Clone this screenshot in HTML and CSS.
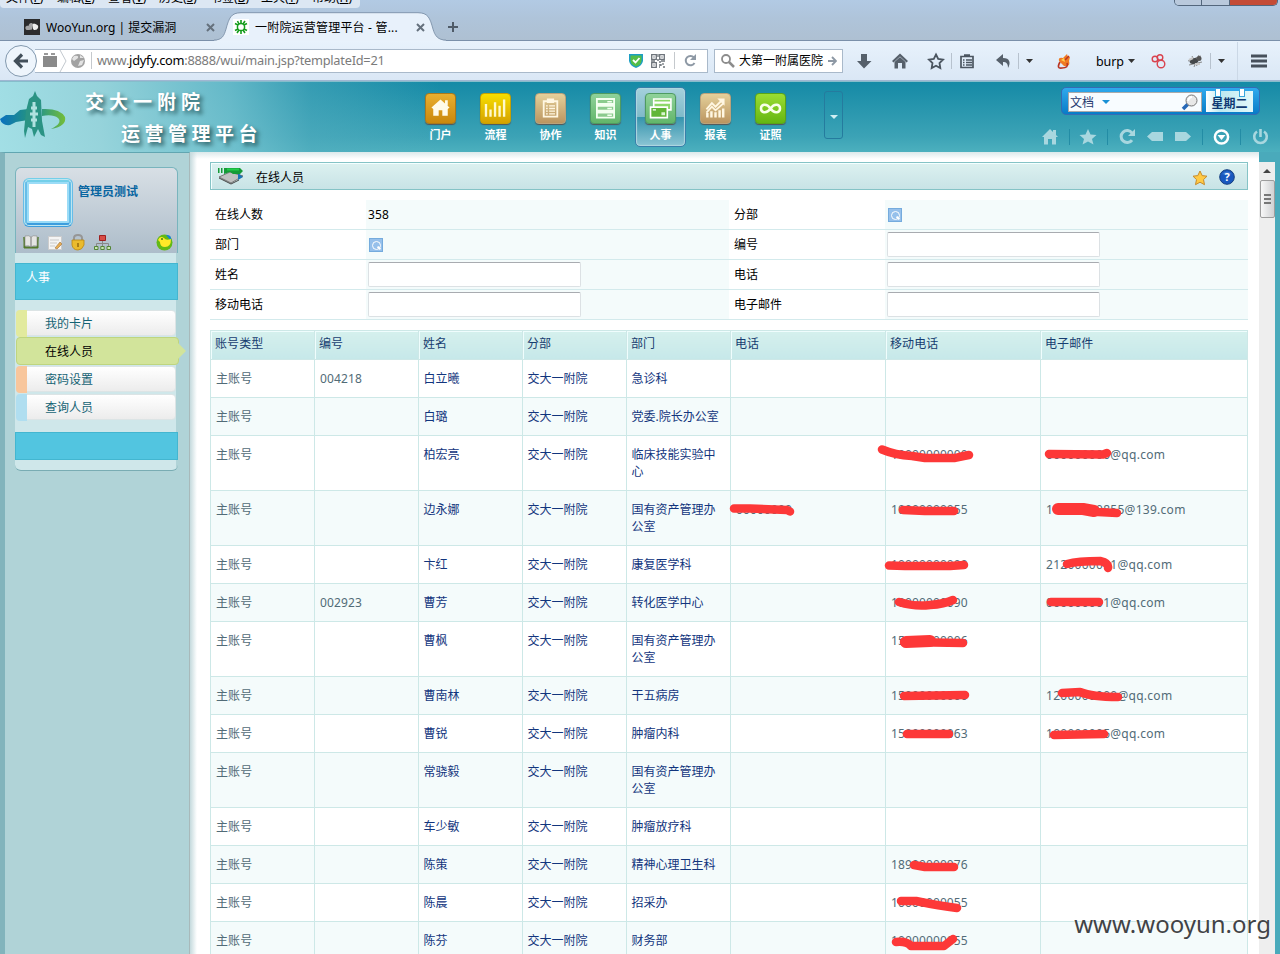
FILE: index.html
```
<!DOCTYPE html>
<html lang="zh-CN">
<head>
<meta charset="utf-8">
<title>一附院运营管理平台</title>
<link rel="stylesheet" href="styles.css">
</head>
<body>
<div class="chrome">
  <div class="menubar">
    <div class="menus"><span>文件(<u>F</u>)</span><span>编辑(<u>E</u>)</span><span>查看(<u>V</u>)</span><span>历史(<u>S</u>)</span><span>书签(<u>B</u>)</span><span>工具(<u>T</u>)</span><span>帮助(<u>H</u>)</span></div>
    <div class="winbtns"><i></i><i></i><i class="close"></i></div>
  </div>
  <div class="tabs">
    <svg class="tabshape" width="232" height="29" viewBox="0 0 232 29"><path d="M0 28.5C8 28 10 24 12 17C15 6 17 1 27 1H204C214 1 216 6 219 17C221 24 224 28 232 28.5V29H0Z" fill="#e8f1fb"/><path d="M0 28C8 28 10 24 12 17C15 6 17 .7 27 .7H204C214 .7 216 6 219 17C221 24 224 28 232 28" fill="none" stroke="#8599b0"/></svg>
    <div class="tab first">
      <svg width="16" height="16" viewBox="0 0 16 16"><rect width="16" height="16" fill="#2b2b2d"/><path d="M2.500 11C0 9 2 6 4.500 7C5 4 7.500 3 9 5L8 10.500L5 11Z" fill="#a5a5a7"/><path d="M9 10L8.500 6Q9 3.500 11.500 5Q15 6 14 9Q13 11.500 10 11Z" fill="#ededed"/></svg>
      <span class="tabtext t1">WooYun.org | 提交漏洞</span><svg class="x" width="9" height="9" viewBox="0 0 9 9"><path d="M1 1L8 8M8 1L1 8"/></svg>
    </div>
    <div class="tab second">
      <svg width="16" height="16" viewBox="0 0 16 16"><rect width="16" height="16" fill="#fff"/><circle cx="8" cy="8" r="3.6" fill="none" stroke="#159c1c" stroke-width="1.500"/><path d="M8 1V4M8 12V15M2 4.500L5 6M11 10L14 11.500M2 11.500L5 10M11 6L14 4.500M4.500 2L6 5M10 11L12 14M12 2L10 5M6 11L4 14" stroke="#159c1c" stroke-width="1.600"/></svg>
      <span class="tabtext t2">一附院运营管理平台 - 管...</span><svg class="x" width="9" height="9" viewBox="0 0 9 9"><path d="M1 1L8 8M8 1L1 8"/></svg>
    </div>
    <svg class="plus" width="10" height="10" viewBox="0 0 10 10"><path d="M5 0V10M0 5H10" stroke="#4f5b68" stroke-width="2"/></svg>
  </div>
  <div class="navbar">
    <div class="back"><svg width="16" height="16" viewBox="0 0 16 16"><path d="M9 1.500L2.500 8L9 14.500M3 8H15" fill="none" stroke="#424f5a" stroke-width="3.200"/></svg></div>
    <div class="url">
      <svg width="56" height="24" viewBox="0 0 56 24"><path d="M8 7H22V18H8Z" fill="#8a8a8a"/><path d="M9 5H13M16 5H20" stroke="#999" stroke-width="2"/><path d="M25 1L31 12L25 23" fill="none" stroke="#c3c9cf"/><circle cx="43" cy="12" r="7" fill="#a2a2a2"/><path d="M39 7Q44 6 43 9L39 12L37 10ZM45 12L49 11L47 16L43 17ZM45 6L49 9L45 9Z" fill="#e3e3e3"/></svg>
      <span class="sep"></span><span class="address">www.<b>jdyfy.com</b>:8888/wui/main.jsp?templateId=21</span>
      <svg width="14" height="16" viewBox="0 0 14 16"><path d="M0 1H14V8Q13 13 7 15Q1 13 0 8Z" fill="#1d9fc4"/><path d="M1.500 2.500H12.500V8Q12 12 7 13.500Q2 12 1.500 8Z" fill="#54bd48"/><path d="M4 7L6.500 9.500L10.500 5" fill="none" stroke="#fff" stroke-width="1.800"/></svg>
      <svg class="qr" width="14" height="14" viewBox="0 0 14 14" fill="none" stroke="#6e747b" stroke-width="1.300"><path d="M.7 .7H5.300V5.300H.7ZM8.700 .7H13.300V5.300H8.700ZM.7 8.700H5.300V13.300H.7ZM2.500 3H3.500M10.500 3H11.500M2.500 11H3.500M7 0V3M6 6H8M0 7H4M8 8H10M10 7H14M12 9V11M8 11H10M10 10V12M8 13H9M12 13H14"/></svg>
      <span class="sep s2"></span>
      <svg width="13" height="13" viewBox="0 0 13 13"><path d="M10.500 9A4.700 4.700 0 1 1 10 3.500" fill="none" stroke="#8e99a5" stroke-width="2"/><path d="M12 0V6H6Z" fill="#8e99a5"/></svg>
    </div>
    <div class="search"><svg width="14" height="14" viewBox="0 0 14 14"><circle cx="5" cy="5" r="4" fill="none" stroke="#8c8c8c" stroke-width="1.800"/><path d="M8 8L13 13" stroke="#8c8c8c" stroke-width="2.500"/></svg><span>大第一附属医院</span><svg width="9" height="10" viewBox="0 0 9 10"><path d="M0 5H8M4 1L8 5L4 9" fill="none" stroke="#8d98a4" stroke-width="1.900"/></svg></div>
    <svg class="tools" width="437" height="40" viewBox="843 41 437 40">
      <g fill="#56606b"><path d="M861 54H867V61H871.500L864 68.500L857 61H861Z"/><path d="M892 61L900 53.500L908 61L906.500 62.500L900 56.500L893.500 62.500Z"/><path d="M894.500 62L900 57L905.500 62V68.500H902V63H898V68.500H894.500Z"/><path d="M996 60L1003 54V58C1010 58 1011 63 1008 68C1008 63 1006 62 1003 62V66Z"/><path d="M1026 59H1033L1029.500 63ZM1128 59H1135L1131.500 63ZM1218 59H1225L1221.500 63Z" fill="#333"/></g>
      <path d="M936 54.500L938.200 59L943 59.700L939.500 63L940.300 68L936 65.700L931.700 68L932.500 63L929 59.700L933.800 59Z" fill="none" stroke="#4b5560" stroke-width="1.800"/>
      <path d="M961 56.500H973V67.500H961ZM963 60H964.500M966 60H972M963 62.500H964.500M966 62.500H972M963 65H964.500M966 65H972M964 55H970" fill="none" stroke="#4b5560" stroke-width="1.700"/>
      <path d="M951.500 53V69M1018.500 53V69M1210.500 53V69" stroke="#b7c2ce"/><path d="M1237.500 42V80" stroke="#cbd8e6"/>
      <path d="M1059 61Q1058 57 1063 58L1067 54L1068 57L1070 57L1069 61Q1071 67 1064 66Z" fill="#f07a22"/><path d="M1060 62Q1056 69 1062 68Q1069 68 1067 63M1065 60L1069 56" stroke="#b93423" stroke-width="1.600" fill="none"/><path d="M1061 60L1064 58L1065 62Z" fill="#ffd14e"/>
      <g fill="none" stroke="#d9424e" stroke-width="1.400"><circle cx="1155" cy="59" r="2.800"/><circle cx="1160" cy="57.500" r="2.800"/><circle cx="1161" cy="64" r="3.800"/></g>
      <path d="M1188 61L1201 56M1189 65L1202 62M1192 56L1197 66M1199 55L1194 67" stroke="#888" stroke-width="1"/><ellipse cx="1194" cy="61" rx="4.500" ry="2.800" fill="#44484b" transform="rotate(-12 1194 61)"/><ellipse cx="1199" cy="58.500" rx="2.500" ry="2.500" fill="#555"/><path d="M1189 60L1193 58M1195 64L1200 64" stroke="#c8c8c8" stroke-width="2"/>
      <path d="M1251 56H1267M1251 61H1267M1251 66H1267" stroke="#47505b" stroke-width="3"/>
      <text x="1096" y="65.500" class="burp" textLength="28">burp</text>
    </svg>
  </div>
</div>
<header class="app">
  <div class="brand">
    <svg width="68" height="50" viewBox="0 0 68 50"><defs><linearGradient id="lg"><stop offset="0" stop-color="#0870c0"/><stop offset="1" stop-color="#239283"/></linearGradient><linearGradient id="lg2"><stop offset="0" stop-color="#2f9a80"/><stop offset="1" stop-color="#74bd38"/></linearGradient></defs><path d="M0 28L6 24L14 24L20 19L28 18V29L16 31L10 34Q2 35 0 28Z" fill="url(#lg)"/><path d="M35 0L37 5L41 9L42 30L45 46L41 44L38 38L34 46L32 38L28 36L25 47L24 40L26 20L29 8L33 5Z" fill="#2a9384"/><path d="M42 18Q60 17 65 26Q67 35 51 38Q63 32 58 27Q53 23 42 25Z" fill="url(#lg2)"/><path d="M34 11V36M31 17H37M30 23H38M31 29H37" fill="none" stroke="#b0e1df" stroke-width="3"/></svg>
    <div class="titles"><div>交大一附院</div><div class="line2">运营管理平台</div></div>
  </div>
  <nav class="modules">
    <div class="mod"><svg class="gold" viewBox="0 0 32 32"><path d="M16 6L26 15L24 16.500V24H18V18H14V24H8V16.500L6 15Z" fill="#fffbe9"/><path d="M21 7H24V13H21Z" fill="#fffbe9"/></svg><span>门户</span></div>
    <div class="mod"><svg class="yellow" viewBox="0 0 32 32"><path d="M5.500 11V25M10.500 17V25M15.500 9V25M20.500 13V25M25.500 6V25" stroke="#fff9cc" stroke-width="2.600"/></svg><span>流程</span></div>
    <div class="mod"><svg class="tan" viewBox="0 0 32 32"><path d="M8.500 8H23.500V25H8.500Z" fill="none" stroke="#fff7e2" stroke-width="2"/><path d="M12 5H20V10H12Z" fill="#fff7e2"/><path d="M11 13H13M14.500 13H21M11 16H13M14.500 16H21M11 19H13M14.500 19H21M11 22H13M14.500 22H21" stroke="#fff7e2" stroke-width="1.400"/></svg><span>协作</span></div>
    <div class="mod"><svg class="green" viewBox="0 0 32 32"><path d="M6.500 5.500H25.500V11H6.500ZM6.500 13H25.500V18.500H6.500ZM6.500 20.500H25.500V26H6.500Z" fill="#8bcb8d" stroke="#f3fff0" stroke-width="2"/><path d="M18 8.500H23M18 16H23M18 23.500H23" stroke="#f3fff0" stroke-width="1.800"/></svg><span>知识</span></div>
    <div class="mod active"><svg class="green" viewBox="0 0 32 32"><path d="M8.500 5.500H27.500V17.500H8.500Z" fill="#8ed86a" stroke="#fff" stroke-width="1.800"/><path d="M9 9.500H27" stroke="#fff" stroke-width="2.500"/><path d="M5 14.500H23.500V26H5Z" fill="#61b637" stroke="#fff" stroke-width="1.800"/><path d="M17 20H21V23.500H17Z" fill="#d9f6d0"/><path d="M7.500 17.500H11" stroke="#fff" stroke-width="1.500"/></svg><span>人事</span></div>
    <div class="mod"><svg class="tan" viewBox="0 0 32 32"><path d="M7 21V26M11.500 19V26M16 20V26M20.500 18V26M24.500 16V26" stroke="#fff7e2" stroke-width="2.700"/><path d="M6 17L12 10L16 14L22 8M6 20.500L12 14L16 18L25 10" fill="none" stroke="#fff7e2" stroke-width="2"/><path d="M18 5H26V13Z" fill="#fff7e2"/></svg><span>报表</span></div>
    <div class="mod"><svg class="lime" viewBox="0 0 32 32"><path d="M16 16C11 9 5.500 12 5.500 16S11 23 16 16S26.500 12 26.500 16S21 23 16 16Z" fill="none" stroke="#f8ffe9" stroke-width="2.800"/></svg><span>证照</span></div>
  </nav>
  <div class="more"></div>
  <div class="headright">
    <div class="finder"><div class="field"><span>文档</span><i></i><svg width="18" height="18" viewBox="0 0 18 18"><path d="M2 16L7 11" stroke="#2769b8" stroke-width="3.500"/><circle cx="10.500" cy="7.500" r="5.500" fill="#e8e8e8" stroke="#777"/><path d="M7 8Q8 4 11 4" fill="none" stroke="#fff" stroke-width="2"/></svg></div><div class="day">星期二</div></div>
    <svg class="quick" width="230" height="22" viewBox="1040 126 230 22"><g fill="#a8d7df"><path d="M1042 137L1050 129L1053 132V130H1056V135L1058 137H1056V144.500H1052V139H1048V144.500H1044V137Z"/><path d="M1088 129L1090.500 134.500L1096.500 135L1092 139L1093.500 144.500L1088 141.500L1082.500 144.500L1084 139L1079.500 135L1085.500 134.500Z"/><path d="M1135 129V136H1128Z"/><path d="M1147 136.500L1152 132H1163V141H1152ZM1191 136.500L1186 132H1175V141H1186Z"/></g><path d="M1132 140A6 6 0 1 1 1132 133" fill="none" stroke="#a8d7df" stroke-width="3"/><path d="M1069.500 129V145M1107.500 129V145M1202.500 129V145M1240.500 129V145" stroke="#238ca5"/><circle cx="1221.500" cy="137" r="6.600" fill="none" stroke="#fff" stroke-width="2.500"/><path d="M1217.500 135H1225.500L1221.500 140Z" fill="#fff"/><path d="M1257 131.500A6.300 6.300 0 1 0 1264 131.500M1260.500 129V137" fill="none" stroke="#a8d7df" stroke-width="2.600"/></svg>
  </div>
</header>
<main class="work">
  <aside class="side">
    <div class="profile">
      <div class="who"><div class="avatar"></div><b>管理员测试</b></div>
      <div class="icons">
        <svg width="88" height="17" viewBox="0 0 88 17"><path d="M1 3V14H15V3L14 13H2Z" fill="#547a2a" stroke="#547a2a"/><path d="M2 2Q6 1 8 3Q10 1 14 2V12Q10 11 8 13Q6 11 2 12Z" fill="#e5e5e3" stroke="#888" stroke-width=".6"/><path d="M8 3V13" stroke="#777"/><path d="M25.500 2.500H38.500V15.500H25.500Z" fill="#f4f4f4" stroke="#ccc"/><path d="M27 6H36M27 9H34M27 12H32" stroke="#c9c9c9"/><path d="M32 14L37 8L39 10L34 15Z" fill="#e9ad52" stroke="#987244" stroke-width=".6"/><path d="M51 7V4Q51 1 55 1Q59 1 59 4V7" fill="none" stroke="#969696" stroke-width="2"/><path d="M49 6H61V11Q59 16 55 16Q50 16 49 11Z" fill="#eabb2e" stroke="#b98612" stroke-width=".8"/><path d="M55 9V13" stroke="#966b0c" stroke-width="1.500"/><path d="M76.500 1.500H82.500V6.500H76.500Z" fill="#d74c46" stroke="#9d2020"/><path d="M79.500 7V12M73.500 12V9.500H85.500V12" stroke="#888" fill="none"/><path d="M71.500 12.500H75V15.500H71.500ZM77.800 12.500H81.200V15.500H77.800ZM84 12.500H87.500V15.500H84Z" fill="#c9e7b4" stroke="#538437"/></svg>
        <svg width="17" height="17" viewBox="0 0 17 17"><circle cx="8.500" cy="8.500" r="8" fill="#63b915"/><path d="M10 1Q16 0 15 7Z" fill="#1783d5"/><path d="M2 6Q4 1 8 4Q10 7 15 5Q15 13 9 13Q4 13 4 8Z" fill="#ffe928"/><circle cx="6" cy="5" r="1" fill="#487615"/></svg>
      </div>
    </div>
    <div class="menu">
      <div class="cap">人事</div>
      <div class="items"><div class="item c1">我的卡片</div><div class="item on">在线人员<svg width="9" height="16" viewBox="0 0 9 16"><path d="M0 0L8 8L0 16Z" fill="#d2e49b"/></svg></div><div class="item c2">密码设置</div><div class="item c3">查询人员</div></div>
      <div class="foot"></div>
    </div>
  </aside>
  <section class="content">
    <div class="titlebar"><svg width="26" height="19" viewBox="0 0 26 19"><path d="M1 10L12 5L25 9L13 16Z" fill="#bfc1c1" stroke="#777"/><path d="M1 11L13 17L21 13" fill="none" stroke="#444"/><path d="M20 6L25 10L20 13Z" fill="#1974b4"/><path d="M0 1H1.500V6H0ZM3 1H4.500V6H3ZM6 1H22L25 4L22 7H15L12 5L6 7Z" fill="#159b37"/><path d="M9 2.500H21" stroke="#21cc4a" stroke-width="2"/></svg><span>在线人员</span>
      <svg class="star" width="16" height="16" viewBox="0 0 16 16"><path d="M8 1L10.200 5.600L15 6.200L11.500 9.600L12.500 14.700L8 12.200L3.500 14.700L4.500 9.600L1 6.200L5.800 5.600Z" fill="#ffca45" stroke="#c68b2e"/></svg>
      <svg class="helpicon" width="16" height="16" viewBox="0 0 16 16"><circle cx="8" cy="8" r="7.300" fill="#1958bf" stroke="#153f80"/><path d="M3 5Q8 0 13 5Q8 7 3 5Z" fill="#5c8fdc" opacity=".5"/><text x="8" y="12" class="help">?</text></svg></div>
    <div class="form">
      <div class="lab">在线人数</div><div class="val num">358</div><div class="lab">分部</div><div class="val"><i class="pick"></i></div>
      <div class="lab">部门</div><div class="val"><i class="pick"></i></div><div class="lab">编号</div><div class="val"><input></div>
      <div class="lab">姓名</div><div class="val"><input></div><div class="lab">电话</div><div class="val"><input></div>
      <div class="lab">移动电话</div><div class="val"><input></div><div class="lab">电子邮件</div><div class="val"><input></div>
    </div>
    <div class="listwrap">
    <table class="list">
      <colgroup><col class="w1"><col class="w1"><col class="w1"><col class="w1"><col class="w1"><col class="w2"><col class="w2"><col></colgroup>
      <tr><th>账号类型</th><th>编号</th><th>姓名</th><th>分部</th><th>部门</th><th>电话</th><th>移动电话</th><th>电子邮件</th></tr>
      <tr><td>主账号</td><td>004218</td><td>白立曦</td><td>交大一附院</td><td>急诊科</td><td></td><td></td><td></td></tr>
      <tr><td>主账号</td><td></td><td>白璐</td><td>交大一附院</td><td>党委.院长办公室</td><td></td><td></td><td></td></tr>
      <tr><td>主账号</td><td></td><td>柏宏亮</td><td>交大一附院</td><td>临床技能实验中心</td><td></td><td>10000000000</td><td>000000000@qq.com</td></tr>
      <tr><td>主账号</td><td></td><td>边永娜</td><td>交大一附院</td><td>国有资产管理办公室</td><td>00000000</td><td>10000000055</td><td>10000000855@139.com</td></tr>
      <tr><td>主账号</td><td></td><td>卞红</td><td>交大一附院</td><td>康复医学科</td><td></td><td>10000000000</td><td>2120000001@qq.com</td></tr>
      <tr><td>主账号</td><td>002923</td><td>曹芳</td><td>交大一附院</td><td>转化医学中心</td><td></td><td>10000000090</td><td>000000001@qq.com</td></tr>
      <tr><td>主账号</td><td></td><td>曹枫</td><td>交大一附院</td><td>国有资产管理办公室</td><td></td><td>15000000006</td><td></td></tr>
      <tr><td>主账号</td><td></td><td>曹南林</td><td>交大一附院</td><td>干五病房</td><td></td><td>15000000000</td><td>1200000000@qq.com</td></tr>
      <tr><td>主账号</td><td></td><td>曹锐</td><td>交大一附院</td><td>肿瘤内科</td><td></td><td>15000000063</td><td>100000005@qq.com</td></tr>
      <tr><td>主账号</td><td></td><td>常骁毅</td><td>交大一附院</td><td>国有资产管理办公室</td><td></td><td></td><td></td></tr>
      <tr><td>主账号</td><td></td><td>车少敏</td><td>交大一附院</td><td>肿瘤放疗科</td><td></td><td></td><td></td></tr>
      <tr><td>主账号</td><td></td><td>陈策</td><td>交大一附院</td><td>精神心理卫生科</td><td></td><td>18900000076</td><td></td></tr>
      <tr><td>主账号</td><td></td><td>陈晨</td><td>交大一附院</td><td>招采办</td><td></td><td>10000000055</td><td></td></tr>
      <tr><td>主账号</td><td></td><td>陈芬</td><td>交大一附院</td><td>财务部</td><td></td><td>10000000055</td><td></td></tr>
    </table>
    <svg class="marks" width="1038" height="624" viewBox="210 330 1038 624"><path d="M882 449.500Q895 455 912 456L925 458L955 458Q963 456 969 455M1049 454L1103 454.500L1107 453M734 508.500L750 508.500L787 510L790 511.500M903 510L925 511L954 511M889 565.500L905 566L950 566L964 565M1067 564Q1078 561 1100 561Q1109 563 1108 568M899 602Q915 607 930 605Q944 604 953 600M1051 602L1099 602M904 642L963 643M904 696L965 695M1062 693L1080 692Q1092 697 1118 697M907 734L949 734M1054 735L1104 734M914 865L925 867L954 867M901 901L916 901Q940 906 957 908M896 942Q907 941 911 946L944 946L953 939"/><path class="fat" d="M906 642L930 641M1058 509L1083 509L1094 511"/><path d="M1080 508L1098 512L1117 513"/></svg>
    </div>
  </section>
  <div class="scroll"><div class="arrow"></div><div class="thumb"><i></i><i></i><i></i></div></div>
</main>
<div class="watermark">www.wooyun.org</div>
</body>
</html>
```
FILE: styles.css
```
* { box-sizing: border-box; }
body { margin: 0; width: 1280px; height: 954px; overflow: hidden; position: relative; background: #fff; font: 12px/17px "Noto Sans", "Noto Sans CJK SC", sans-serif; color: #000; }
svg { display: block; flex: none; }
.chrome { height: 81px; background: linear-gradient(#b2cae4, #afc4da 18px, #aec0d2 40px); }
.menubar { height: 8px; display: flex; justify-content: space-between; overflow: hidden; }
.menus { width: 360px; height: 8px; display: flex; gap: 13px; padding-left: 6px; background: #dce7f3; border-radius: 0 0 4px 4px; }
.menus span { width: 38px; margin-top: -11px; white-space: nowrap; line-height: 18px; }
.winbtns { display: flex; width: 104px; height: 6px; border: 1px solid #53677d; border-top: 0; border-radius: 0 0 5px 5px; margin-right: 2px; overflow: hidden; }
.winbtns i { width: 28px; border-right: 1px solid #53677d; background: #b9c9dc; }
.winbtns .close { width: 48px; background: #c44b35; border: 0; }
.tabs { height: 33px; display: flex; align-items: flex-start; position: relative; border-bottom: 1px solid #7b90aa; }
.tabshape { position: absolute; left: 214px; top: 4px; }
.tab { display: flex; align-items: center; height: 16px; margin-top: 11px; position: relative; white-space: nowrap; }
.first { margin-left: 24px; width: 191px; }
.second { margin-left: 18px; width: 192px; }
.tab .x { margin-left: auto; fill: none; stroke: #65717d; stroke-width: 2; }
.tabtext { margin-left: 6px; }
.t1 { font-size: 12px; }
.t2 { letter-spacing: .2px; }
.plus { margin: 14px 0 0 23px; }
.navbar { height: 40px; background: linear-gradient(#e8f2fc, #dae7f5); display: flex; align-items: center; border-bottom: 1px solid #9fb6d2; }
.back { width: 32px; height: 32px; border: 1px solid #8399ae; border-radius: 50%; background: #eef5fc; display: grid; place-items: center; margin-left: 5px; position: relative; }
.url { width: 673px; height: 24px; margin-left: -2px; background: #fff; border: 1px solid #a9b9ca; border-left: 0; display: flex; align-items: center; }
.sep { width: 1px; height: 17px; background: #c5c9cd; }
.address { width: 537px; padding-left: 5px; font-size: 12.8px; letter-spacing: -.25px; color: #7b7b7b; }
.address b { font-weight: 400; color: #000; }
.qr { margin-left: 8px; }
.sep.s2 { margin: 0 9px; }
.search { width: 129px; height: 24px; margin-left: 6px; background: #fff; border: 1px solid #a9b9ca; display: flex; align-items: center; padding-left: 6px; gap: 5px; white-space: nowrap; }
.search span { margin-left: -1px; }
.burp { font-size: 12.5px; }
.app { height: 71px; display: flex; background: linear-gradient(90deg, rgba(166,225,231,.96), rgba(155,214,221,.95) 100px, rgba(125,199,211,.75) 230px, rgba(84,173,191,.5) 310px, rgba(40,150,170,0) 440px), linear-gradient(#158aa6, #3ca3b6 55px, #4cb0be); border-top: 1px solid #86bdcb; }
.brand { width: 415px; display: flex; padding-top: 9px; }
.titles { margin: -4px 0 0 17px; color: #fff; font: 700 19px/28px "Noto Sans CJK SC", sans-serif; letter-spacing: 5px; text-shadow: 3px 3px 4px #27585d; white-space: nowrap; }
.titles .line2 { margin: 4px 0 0 36px; letter-spacing: 4.5px; }
.modules { display: flex; padding-top: 5px; }
.mod { width: 51px; height: 60px; margin-right: 4px; padding-top: 6px; display: flex; flex-direction: column; align-items: center; color: #fff; font-weight: 700; font-size: 11px; }
.mod svg { width: 31px; height: 31px; border-radius: 4px; margin-bottom: 3px; box-shadow: 0 1px 1px #555; border: 1px solid #62994d; }
.mod span { line-height: 16px; }
.mod .gold { background: linear-gradient(#e9af30, #ca880c); border-color: #ad7918; }
.mod .yellow { background: linear-gradient(#f7de00, #d5a200); border-color: #c7a100; }
.mod .tan { background: linear-gradient(#e4d09a, #bb9560); border-color: #bca27a; }
.mod .green { background: linear-gradient(#8fd29a, #63b66a); border-color: #4e9b61; }
.mod .lime { background: linear-gradient(#9bdd33, #65b611); border-color: #5aa517; }
.mod.active { border: 1px solid #397faa; border-radius: 5px; padding-top: 5px; background: linear-gradient(#a5d1dc, #7fbac9 50%, #3594ad 50%, #8cc5d4); box-shadow: inset 0 0 1px 1px #b1d8e0; }
.more { width: 19px; height: 48px; margin: 9px 0 0 24px; border: 1px solid #257b9e; border-radius: 3px; display: grid; place-items: center; }
.more:after { content: ""; border: 4px solid transparent; border-top-color: #d0eff3; border-bottom: 0; margin-top: 3px; }
.headright { margin-left: auto; width: 240px; padding-top: 5px; }
.finder { width: 199px; height: 28px; margin-left: 21px; background: linear-gradient(#2fa9ed, #087cc7); border: 1px solid #356bb4; border-radius: 5px; padding: 4px 6px; display: flex; gap: 4px; }
.field { width: 134px; height: 20px; background: #f8fcff; border: 1px solid #aaa; display: flex; align-items: center; padding-left: 1px; color: #263a70; }
.field i { border: 4px solid transparent; border-top-color: #1990d5; border-bottom: 0; margin: 0 auto 0 8px; }
.field svg { margin-right: 2px; }
.day { width: 47px; height: 21px; margin-top: -1px; background: linear-gradient(90deg, #fff, #bde9f0 30%, #e2f8fa); color: #103a72; font: 700 12px/24px "Noto Sans CJK SC", sans-serif; text-align: center; position: relative; }
.day:before, .day:after { content: ""; position: absolute; width: 4px; height: 7px; top: -3px; left: 9px; border: 1px solid #37a6dd; background: #fff; }
.day:after { left: 33px; }
.quick { margin-top: 11px; }
.work { height: 802px; display: flex; background: #4aaabb; padding-right: 5px; }
.side { width: 190px; background: #b0d3d7; border-left: 5px solid #82b4bc; border-top: 1px solid #61a6b1; border-right: 1px solid #a8b9ba; padding: 14px 12px 0 10px; }
.profile { width: 163px; height: 86px; border: 1px solid #79b4bd; border-bottom: 0; border-radius: 6px 6px 0 0; background: linear-gradient(#d8dfe5, #adbdca); padding: 10px 4px 0 7px; }
.who { display: flex; }
.who b { margin: 5px 0 0 5px; color: #0865a1; font-size: 12px; }
.avatar { width: 50px; height: 49px; border: 4px solid #75d4f2; border-color: #73cfe9 #66bde8 #3d9ddd; background: #fff; border-radius: 6px; box-shadow: inset 0 0 0 2px #9bdcf7; outline: 1px solid #bde6f1; outline-offset: -2px; }
.icons { display: flex; justify-content: space-between; margin-top: 7px; }
.menu { width: 163px; height: 218px; padding-top: 10px; background: linear-gradient(90deg, #cfe7ea 161px, #b0d3d7 161px); border-bottom: 1px solid #79acb3; border-radius: 0 0 6px 6px; }
.cap, .foot { width: 163px; border: 1px solid #43b6d0; background: #52c5e0; }
.cap { height: 37px; padding: 5px 10px; color: #fff; }
.items { margin: 10px 0 12px 1px; }
.item { width: 160px; height: 26px; margin-bottom: 2px; border: 1px solid #dce4e5; border-radius: 4px; padding-left: 28px; line-height: 25px; background: linear-gradient(#fff, #ececec); color: #156374; position: relative; }
.item:before { content: ""; position: absolute; left: -1px; top: -1px; width: 11px; height: 27px; border-radius: 4px 0 0 4px; background: #e2ea9e; }
.item.on { width: 163px; height: 28px; margin: -1px 0 1px; background: #d2e49b; border-color: #bfd57f; color: #000; line-height: 27px; }
.item.on:before { display: none; }
.item.on svg { position: absolute; right: -9px; top: 5px; }
.item.c2:before { background: #f8c69c; }
.item.c3:before { background: #b0def0; }
.foot { height: 28px; }
.content { width: 1069px; background: linear-gradient(90deg, #c5dadd, transparent 7px), linear-gradient(#dce9eb, #fff 7px); padding: 10px 0 0 20px; }
.titlebar { width: 1038px; height: 28px; border: 1px solid #85c3c6; box-shadow: inset 1px 1px #f4ffff; background: linear-gradient(#dcf1f0, #c8e3e6); display: flex; align-items: center; padding: 0 12px 0 7px; gap: 12px; }
.titlebar span { padding-top: 2px; }
.star { margin: 3px -1px 0 auto; }
.helpicon { margin-top: 2px; }
.help { font: 700 11px "Noto Sans"; fill: #fff; text-anchor: middle; }
.form { width: 1038px; margin-top: 10px; display: grid; grid-template-columns: 156px 363px 156px 363px; grid-auto-rows: 30px; }
.lab, .val { border-bottom: 1px solid #d3eaec; display: flex; align-items: center; padding-left: 5px; background: #fff; }
.val { background: #f4fbfb; padding-left: 2px; }
.num { letter-spacing: .15px; }
.val input { width: 213px; height: 25px; border: 1px solid #dce1e4; border-top-color: #a8abb0; border-radius: 2px; background: #fff; }
.pick { width: 14px; height: 14px; margin-left: 1px; border: 1px solid #75abdd; background: #96c0eb; position: relative; }
.pick:before { content: ""; position: absolute; left: 2px; top: 2px; width: 7px; height: 7px; border: 1.500px solid #fff; border-radius: 50%; }
.pick:after { content: ""; position: absolute; left: 7px; top: 8px; width: 4px; height: 2px; background: #fff; transform: rotate(45deg); }
.listwrap { margin-top: 10px; position: relative; width: 1038px; }
.list { width: 1038px; table-layout: fixed; border-collapse: collapse; }
.w1 { width: 104px; }
.w2 { width: 155px; }
.list td, .list th { border: 1px solid #cde8e7; height: 38px; padding: 10px 10px 10px 5px; text-align: left; vertical-align: top; color: #526b77; font-weight: 400; white-space: nowrap; letter-spacing: .12px; }
.list td:nth-child(3), .list td:nth-child(4), .list td:nth-child(5) { color: #12357d; letter-spacing: 0; padding-left: 4.500px; }
.list td:nth-child(5) { white-space: normal; }
.list td:nth-child(8) { letter-spacing: .28px; }
.list th { height: 29px; padding: 4px 4px 7px; color: #173d70; background: linear-gradient(#d5f0ed, #c6e8e9); box-shadow: inset 1px 1px #effdfd; }
.list tr:nth-child(odd) td { background: #f4fbfb; }
.marks { position: absolute; left: 0; top: 0; fill: none; stroke: #fd3838; stroke-width: 8.500px; stroke-linecap: round; stroke-linejoin: round; }
.marks .fat { stroke-width: 12px; }
.scroll { width: 16px; margin-top: 10px; background: #eee; display: flex; flex-direction: column; align-items: center; }
.arrow { border: 4px solid transparent; border-bottom-color: #444; border-top: 0; margin: 7px 0; }
.thumb { width: 15px; height: 38px; border: 1px solid #9d9d9d; border-radius: 2px; background: linear-gradient(90deg, #f8f8f8, #d0d1d3); display: grid; align-content: center; justify-items: center; gap: 2px; }
.thumb i { width: 7px; height: 2px; background: #777; }
.watermark { position: absolute; right: 9px; bottom: 13px; font-size: 24px; line-height: 34px; color: #414346; text-shadow: 0 0 2px #fff; white-space: nowrap; }
```
